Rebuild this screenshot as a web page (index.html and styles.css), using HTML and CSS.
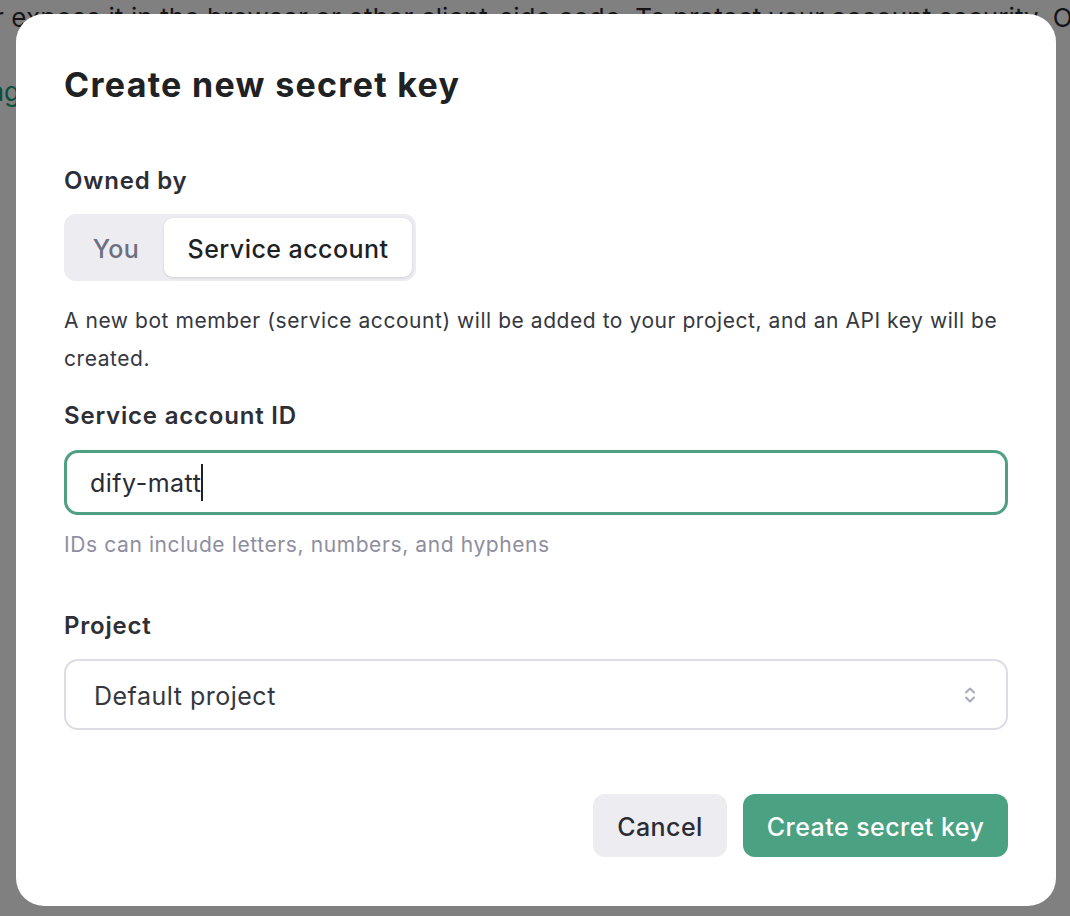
FILE: index.html
```html
<!DOCTYPE html>
<html lang="en">
<head>
<meta charset="utf-8">
<title>Create new secret key</title>
<link rel="stylesheet" href="styles.css">
</head>
<body>
<div class="page">
  <p class="bg-line">r expose it in the browser or other client-side code. To protect your account security, OpenAI</p>
  <p class="bg-link">Manage</p>
</div>
<div class="overlay">
  <div class="modal">
    <h1 class="title">Create new secret key</h1>
    <div class="label label-owned">Owned by</div>
    <div class="segmented">
      <span class="seg-item">You</span>
      <span class="seg-item seg-active">Service account</span>
    </div>
    <p class="desc">A new bot member (service account) will be added to your project, and an API key will be created.</p>
    <div class="label label-id">Service account ID</div>
    <div class="input focused"><span class="input-text">dify-matt</span><span class="caret"></span></div>
    <div class="hint">IDs can include letters, numbers, and hyphens</div>
    <div class="label label-project">Project</div>
    <div class="select">
      <span class="select-text">Default project</span>
      <svg class="chev" width="14" height="20" viewBox="0 0 14 20" fill="none" stroke="#a9a9bd" stroke-width="2" stroke-linecap="round" stroke-linejoin="round"><path d="M3 7.5 L7 3.5 L11 7.5"/><path d="M3 12.5 L7 16.5 L11 12.5"/></svg>
    </div>
    <div class="actions">
      <button class="btn btn-cancel">Cancel</button>
      <button class="btn btn-primary">Create secret key</button>
    </div>
  </div>
</div>
</body>
</html>
```
FILE: styles.css
```css
* { box-sizing: border-box; }
html, body { margin: 0; padding: 0; }
body {
  width: 1070px;
  height: 916px;
  overflow: hidden;
  background: #808080;
  font-family: "Inter", "Liberation Sans", sans-serif;
  position: relative;
}
.page {
  width: 1070px;
  overflow: hidden;
}
.bg-line {
  margin: 0;
  margin-left: -6px;
  white-space: nowrap;
  font-size: 26px;
  line-height: 36px;
  letter-spacing: 0.1px;
  color: #151519;
}
.bg-link {
  margin: 38px 0 0 -64px;
  font-size: 26px;
  line-height: 36px;
  color: #0b4f3c;
}
.overlay {
  position: absolute;
  inset: 0;
}
.modal {
  position: absolute;
  left: 16px;
  top: 14px;
  width: 1040px;
  height: 892px;
  background: #fff;
  border-radius: 28px;
  padding: 51px 48px 0 48px;
  display: flex;
  flex-direction: column;
  color: #353740;
}
.title {
  margin: 0;
  font-size: 34px;
  line-height: 40px;
  font-weight: 700;
  color: #202123;
  letter-spacing: 1.3px;
}
.label {
  font-size: 24px;
  line-height: 30px;
  font-weight: 600;
  letter-spacing: 0.8px;
  color: #2e2f36;
}
.label-owned { margin-top: 61px; }
.label-id { margin-top: 23px; }
.label-project { margin-top: 52px; }
.segmented {
  margin-top: 18px;
  align-self: flex-start;
  display: flex;
  background: #ececf1;
  border-radius: 12px;
  padding: 4px;
  height: 67px;
}
.seg-item {
  display: flex;
  align-items: center;
  justify-content: center;
  font-size: 25px;
  letter-spacing: 0.45px;
  font-weight: 500;
  color: #6e6e80;
  border-radius: 9px;
  padding-top: 2px;
}
.seg-item:first-child { width: 96px; }
.seg-active {
  width: 248px;
  background: #fff;
  color: #202123;
  box-shadow: 0 1px 3px rgba(0,0,0,0.12);
}
.desc {
  margin: 21px 0 0;
  font-size: 21px;
  line-height: 38px;
  letter-spacing: 0.55px;
  color: #353740;
}
.input {
  margin-top: 19px;
  height: 65px;
  border: 3px solid #4fa083;
  border-radius: 14px;
  padding-left: 23px;
  display: flex;
  align-items: center;
  font-size: 25px;
  letter-spacing: 0.5px;
  color: #2b2c33;
}
.caret {
  display: inline-block;
  width: 2px;
  height: 37px;
  background: #202123;
  margin-left: 0;
}
.hint {
  margin-top: 16px;
  font-size: 21px;
  line-height: 28px;
  letter-spacing: 0.6px;
  color: #8e8ea0;
}
.select {
  margin-top: 18px;
  height: 71px;
  border: 2px solid #dcdce5;
  border-radius: 14px;
  padding: 2px 29px 0 28px;
  display: flex;
  align-items: center;
  justify-content: space-between;
  font-size: 25px;
  letter-spacing: 0.5px;
  color: #353740;
}
.chev { display: block; margin-top: -2px; }
.actions {
  margin-top: 64px;
  display: flex;
  justify-content: flex-end;
  gap: 16px;
}
.btn {
  height: 63px;
  border: none;
  border-radius: 12px;
  font-family: inherit;
  font-size: 25px;
  letter-spacing: 0.45px;
  font-weight: 500;
  padding: 3px 0 0;
}
.btn-cancel {
  width: 134px;
  background: #ececf1;
  color: #2b2c33;
}
.btn-primary {
  width: 265px;
  background: #4ba283;
  color: #fff;
}
```
